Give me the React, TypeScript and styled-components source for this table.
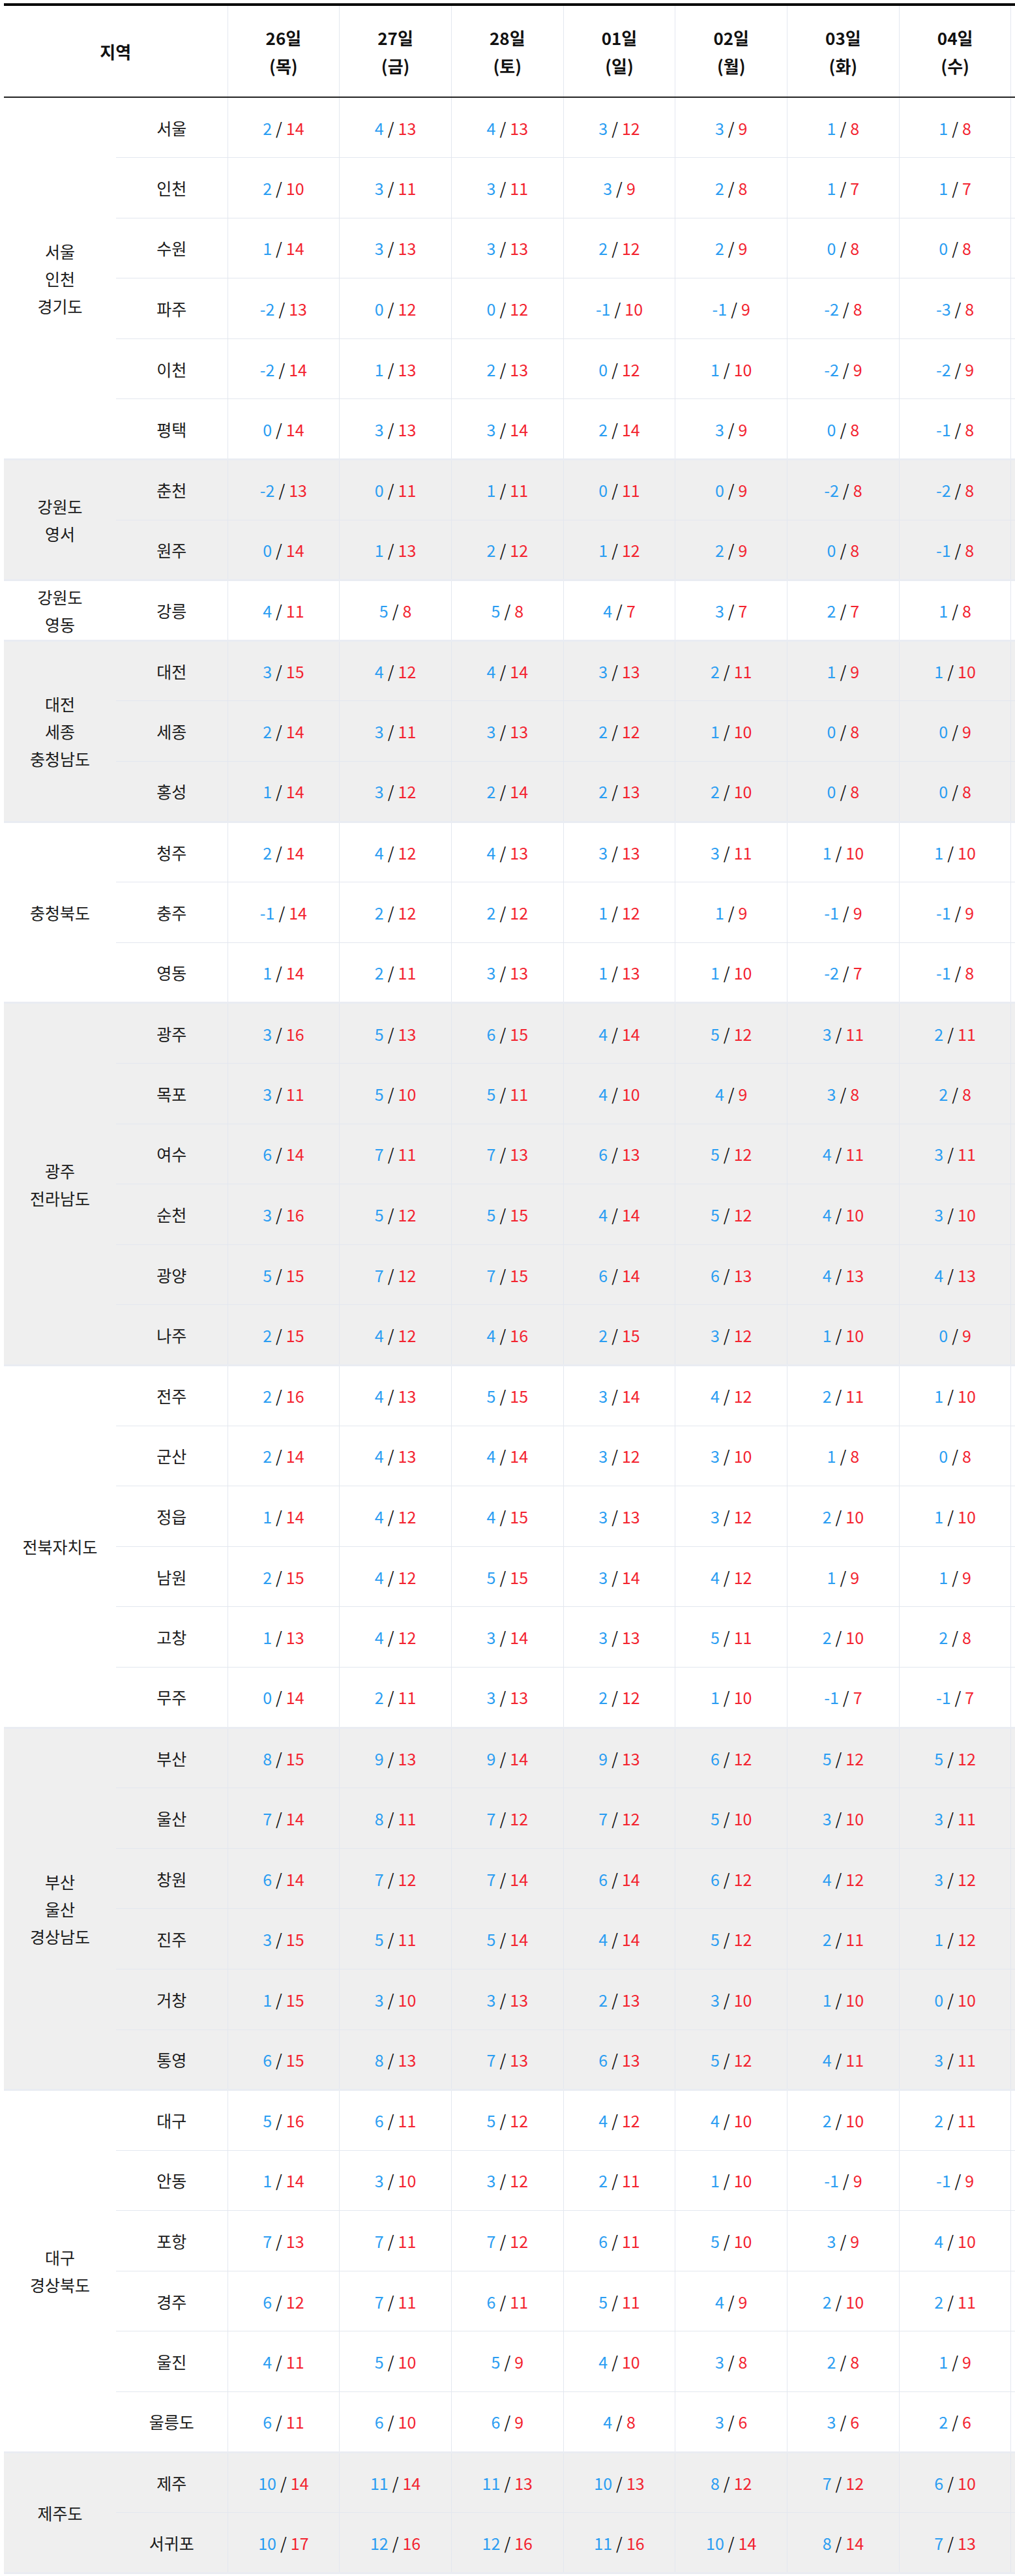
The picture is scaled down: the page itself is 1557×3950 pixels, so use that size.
import React from "react";
import styled, { createGlobalStyle } from "styled-components";

const GlobalStyle = createGlobalStyle`
  html, body {
    margin: 0;
    padding: 0;
    background: #ffffff;
    overflow-x: hidden;
  }
  body {
    font-family: "Noto Sans CJK KR", "Noto Sans", sans-serif;
    color: #1a1a1a;
  }
`;

const LINE = "#e3e7ef";
const GROUP_LINE = "#e9ecf2";
const SHADE = "#efefef";

const days = [
  ["26일", "목"],
  ["27일", "금"],
  ["28일", "토"],
  ["01일", "일"],
  ["02일", "월"],
  ["03일", "화"],
  ["04일", "수"],
];

// region lines | city low/high ...
const raw = [
  {
    region: ["서울", "인천", "경기도"],
    rows: [
      "서울 2/14 4/13 4/13 3/12 3/9 1/8 1/8",
      "인천 2/10 3/11 3/11 3/9 2/8 1/7 1/7",
      "수원 1/14 3/13 3/13 2/12 2/9 0/8 0/8",
      "파주 -2/13 0/12 0/12 -1/10 -1/9 -2/8 -3/8",
      "이천 -2/14 1/13 2/13 0/12 1/10 -2/9 -2/9",
      "평택 0/14 3/13 3/14 2/14 3/9 0/8 -1/8",
    ],
  },
  {
    region: ["강원도", "영서"],
    rows: [
      "춘천 -2/13 0/11 1/11 0/11 0/9 -2/8 -2/8",
      "원주 0/14 1/13 2/12 1/12 2/9 0/8 -1/8",
    ],
  },
  {
    region: ["강원도", "영동"],
    rows: ["강릉 4/11 5/8 5/8 4/7 3/7 2/7 1/8"],
  },
  {
    region: ["대전", "세종", "충청남도"],
    rows: [
      "대전 3/15 4/12 4/14 3/13 2/11 1/9 1/10",
      "세종 2/14 3/11 3/13 2/12 1/10 0/8 0/9",
      "홍성 1/14 3/12 2/14 2/13 2/10 0/8 0/8",
    ],
  },
  {
    region: ["충청북도"],
    rows: [
      "청주 2/14 4/12 4/13 3/13 3/11 1/10 1/10",
      "충주 -1/14 2/12 2/12 1/12 1/9 -1/9 -1/9",
      "영동 1/14 2/11 3/13 1/13 1/10 -2/7 -1/8",
    ],
  },
  {
    region: ["광주", "전라남도"],
    rows: [
      "광주 3/16 5/13 6/15 4/14 5/12 3/11 2/11",
      "목포 3/11 5/10 5/11 4/10 4/9 3/8 2/8",
      "여수 6/14 7/11 7/13 6/13 5/12 4/11 3/11",
      "순천 3/16 5/12 5/15 4/14 5/12 4/10 3/10",
      "광양 5/15 7/12 7/15 6/14 6/13 4/13 4/13",
      "나주 2/15 4/12 4/16 2/15 3/12 1/10 0/9",
    ],
  },
  {
    region: ["전북자치도"],
    rows: [
      "전주 2/16 4/13 5/15 3/14 4/12 2/11 1/10",
      "군산 2/14 4/13 4/14 3/12 3/10 1/8 0/8",
      "정읍 1/14 4/12 4/15 3/13 3/12 2/10 1/10",
      "남원 2/15 4/12 5/15 3/14 4/12 1/9 1/9",
      "고창 1/13 4/12 3/14 3/13 5/11 2/10 2/8",
      "무주 0/14 2/11 3/13 2/12 1/10 -1/7 -1/7",
    ],
  },
  {
    region: ["부산", "울산", "경상남도"],
    rows: [
      "부산 8/15 9/13 9/14 9/13 6/12 5/12 5/12",
      "울산 7/14 8/11 7/12 7/12 5/10 3/10 3/11",
      "창원 6/14 7/12 7/14 6/14 6/12 4/12 3/12",
      "진주 3/15 5/11 5/14 4/14 5/12 2/11 1/12",
      "거창 1/15 3/10 3/13 2/13 3/10 1/10 0/10",
      "통영 6/15 8/13 7/13 6/13 5/12 4/11 3/11",
    ],
  },
  {
    region: ["대구", "경상북도"],
    rows: [
      "대구 5/16 6/11 5/12 4/12 4/10 2/10 2/11",
      "안동 1/14 3/10 3/12 2/11 1/10 -1/9 -1/9",
      "포항 7/13 7/11 7/12 6/11 5/10 3/9 4/10",
      "경주 6/12 7/11 6/11 5/11 4/9 2/10 2/11",
      "울진 4/11 5/10 5/9 4/10 3/8 2/8 1/9",
      "울릉도 6/11 6/10 6/9 4/8 3/6 3/6 2/6",
    ],
  },
  {
    region: ["제주도"],
    rows: [
      "제주 10/14 11/14 11/13 10/13 8/12 7/12 6/10",
      "서귀포 10/17 12/16 12/16 11/16 10/14 8/14 7/13",
    ],
  },
];

const groups = raw.map((g) => ({
  region: g.region,
  rows: g.rows.map((line) => {
    const [city, ...temps] = line.split(" ");
    return { city, temps: temps.map((t) => t.split("/")) };
  }),
}));

const Page = styled.div`
  padding: 5px 0 0 6px;
`;

const Table = styled.table`
  width: 1551px;
  table-layout: fixed;
  border-collapse: collapse;
  border-spacing: 0;
`;

const HeadRow = styled.tr`
  height: 142px;
`;

const HeadCell = styled.th<{ $divider?: boolean }>`
  padding: 0;
  border-top: 4px solid #000;
  border-bottom: 2px solid #222;
  border-left: ${(p) => (p.$divider ? `1px solid ${LINE}` : "none")};
  font-size: 26px;
  font-weight: 700;
  line-height: 43px;
  color: #111;
  text-align: center;
  vertical-align: middle;
`;

const Row = styled.tr<{ $shade: boolean }>`
  height: 92.6px;
  background: ${(p) => (p.$shade ? SHADE : "#ffffff")};
`;

const RegionCell = styled.td`
  padding: 0;
  border-bottom: 3px solid ${GROUP_LINE};
  font-size: 25px;
  line-height: 42px;
  text-align: center;
  vertical-align: middle;
  white-space: pre-line;
  color: #1a1a1a;
`;

const CityCell = styled.td<{ $last: boolean }>`
  padding: 0;
  border-bottom: ${(p) =>
    p.$last ? `3px solid ${GROUP_LINE}` : `1px solid ${LINE}`};
  font-size: 25px;
  text-align: center;
  vertical-align: middle;
  color: #1a1a1a;
`;

const TempCell = styled.td<{ $last: boolean }>`
  padding: 0;
  border-left: 1px solid ${LINE};
  border-bottom: ${(p) =>
    p.$last ? `3px solid ${GROUP_LINE}` : `1px solid ${LINE}`};
  font-size: 25px;
  text-align: center;
  vertical-align: middle;
  white-space: nowrap;
`;

const EdgeCell = styled.td<{ $last: boolean; $head?: boolean }>`
  padding: 0;
  border-left: 1px solid ${LINE};
  border-top: ${(p) => (p.$head ? "4px solid #000" : "none")};
  border-bottom: ${(p) =>
    p.$head
      ? "2px solid #222"
      : p.$last
      ? `3px solid ${GROUP_LINE}`
      : `1px solid ${LINE}`};
`;

const Low = styled.span`
  color: #2a9df2;
`;

const High = styled.span`
  color: #f3232f;
`;

const Slash = styled.span`
  color: #111;
  margin: 0 6px;
`;

export default function App() {
  return (
    <Page>
      <GlobalStyle />
      <Table>
        <colgroup>
          <col style={{ width: 172 }} />
          <col style={{ width: 171 }} />
          {days.map((d) => (
            <col key={d[0]} style={{ width: 171.7 }} />
          ))}
          <col style={{ width: 6 }} />
        </colgroup>
        <thead>
          <HeadRow>
            <HeadCell colSpan={2}>지역</HeadCell>
            {days.map(([date, wd]) => (
              <HeadCell key={date} $divider>
                {date}
                <br />({wd})
              </HeadCell>
            ))}
            <EdgeCell $last={false} $head as="th" />
          </HeadRow>
        </thead>
        <tbody>
          {groups.map((g, gi) =>
            g.rows.map((r, ri) => {
              const last = ri === g.rows.length - 1;
              return (
                <Row key={`${gi}-${r.city}`} $shade={gi % 2 === 1}>
                  {ri === 0 && (
                    <RegionCell rowSpan={g.rows.length}>
                      {g.region.join("\n")}
                    </RegionCell>
                  )}
                  <CityCell $last={last}>{r.city}</CityCell>
                  {r.temps.map(([lo, hi], ti) => (
                    <TempCell key={ti} $last={last}>
                      <Low>{lo}</Low>
                      <Slash>/</Slash>
                      <High>{hi}</High>
                    </TempCell>
                  ))}
                  <EdgeCell $last={last} />
                </Row>
              );
            })
          )}
        </tbody>
      </Table>
    </Page>
  );
}
